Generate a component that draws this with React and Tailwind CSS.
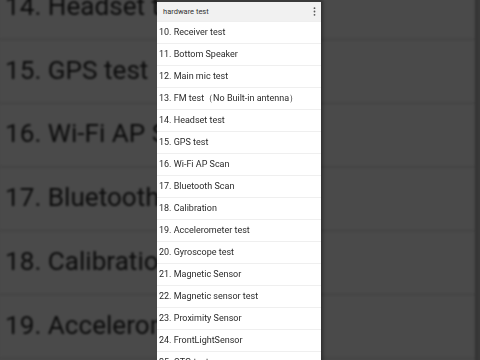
import React from 'react';

const ITEMS = [
  '10. Receiver test',
  '11. Bottom Speaker',
  '12. Main mic test',
  '13. FM test（No Built-in antenna）',
  '14. Headset test',
  '15. GPS test',
  '16. Wi-Fi AP Scan',
  '17. Bluetooth Scan',
  '18. Calibration',
  '19. Accelerometer test',
  '20. Gyroscope test',
  '21. Magnetic Sensor',
  '22. Magnetic sensor test',
  '23. Proximity Sensor',
  '24. FrontLightSensor',
  '25. OTG test',
];

function Panel() {
  return (
    <div className="flex h-[400px] w-[164px] shrink-0 flex-col bg-white shadow-[2px_0_3px_rgba(0,0,0,0.35)]">
      <div className="h-[2px] bg-[#3a3a3a]" />
      <div className="flex h-[19px] items-center justify-between bg-[#f1f1f1] pl-[6px] pr-[5px] text-[7.5px] text-[#333]">
        <span>hardware test</span>
        <svg width="3" height="9" viewBox="0 0 3 9" className="fill-[#555]">
          <circle cx="1.5" cy="1.2" r="0.9" />
          <circle cx="1.5" cy="4.5" r="0.9" />
          <circle cx="1.5" cy="7.8" r="0.9" />
        </svg>
      </div>
      {ITEMS.map((t) => (
        <div
          key={t}
          className="flex h-[22px] shrink-0 items-center border-t border-[#efefef] pl-[2px] text-[9px] whitespace-nowrap text-[#2a2a2a]"
        >
          {t}
        </div>
      ))}
    </div>
  );
}

export default function App() {
  return (
    <div className="relative h-[360px] w-[480px] overflow-hidden bg-[#4a4a4a] font-['Roboto',sans-serif]">
      {/* blurred, zoomed copy of the frame behind */}
      <div className="absolute inset-0 flex origin-[240px_180px] scale-[2.9] justify-center blur-[0.3px] brightness-[0.29]">
        <div className="mr-[2px]">
          <Panel />
        </div>
      </div>
      <div className="relative flex h-full justify-center">
        <div className="mr-[2px]">
          <Panel />
        </div>
      </div>
    </div>
  );
}
